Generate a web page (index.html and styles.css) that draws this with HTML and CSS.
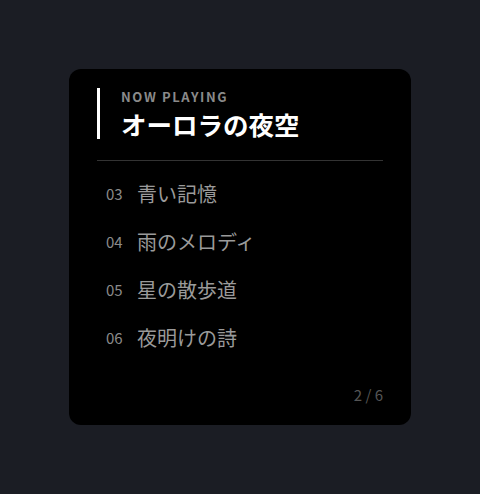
FILE: index.html
```html
<!DOCTYPE html>
<html lang="ja">
<head>
<meta charset="utf-8">
<link rel="stylesheet" href="styles.css">
</head>
<body>
<div class="card">
  <div class="now">
    <div class="label">NOW PLAYING</div>
    <div class="title">オーロラの夜空</div>
  </div>
  <div class="divider"></div>
  <ul class="list">
    <li><span class="num">03</span><span class="name">青い記憶</span></li>
    <li><span class="num">04</span><span class="name">雨のメロディ</span></li>
    <li><span class="num">05</span><span class="name">星の散歩道</span></li>
    <li><span class="num">06</span><span class="name">夜明けの詩</span></li>
  </ul>
  <div class="footer">2 / 6</div>
</div>
</body>
</html>
```

FILE: styles.css
```css
html, body {
  margin: 0;
  height: 100%;
}
body {
  background: #1b1d24;
  display: flex;
  align-items: center;
  justify-content: center;
  font-family: "Noto Sans CJK JP", "Noto Sans", sans-serif;
}
.card {
  width: 342px;
  height: 356px;
  box-sizing: border-box;
  background: #000;
  border-radius: 12px;
  padding: 19px 28px 0 28px;
  display: flex;
  flex-direction: column;
}
.now {
  border-left: 3px solid #fff;
  padding-left: 21px;
}
.label {
  font-size: 13px;
  line-height: 18px;
  font-weight: 700;
  letter-spacing: 1.6px;
  color: #8a8a8a;
}
.title {
  font-size: 25.5px;
  line-height: 31px;
  margin-top: 2px;
  font-weight: 700;
  color: #fff;
}
.divider {
  height: 1px;
  background: #333;
  margin-top: 21px;
}
.list {
  list-style: none;
  margin: 8px 0 0;
  padding: 0;
}
.list li {
  height: 48px;
  display: flex;
  align-items: center;
  padding-left: 9px;
}
.num {
  font-size: 15px;
  color: #8a8a8a;
  width: 31px;
}
.name {
  font-size: 20px;
  color: #9a9a9a;
}
.footer {
  margin-top: auto;
  margin-bottom: 20px;
  text-align: right;
  font-size: 15px;
  color: #555;
}
```
